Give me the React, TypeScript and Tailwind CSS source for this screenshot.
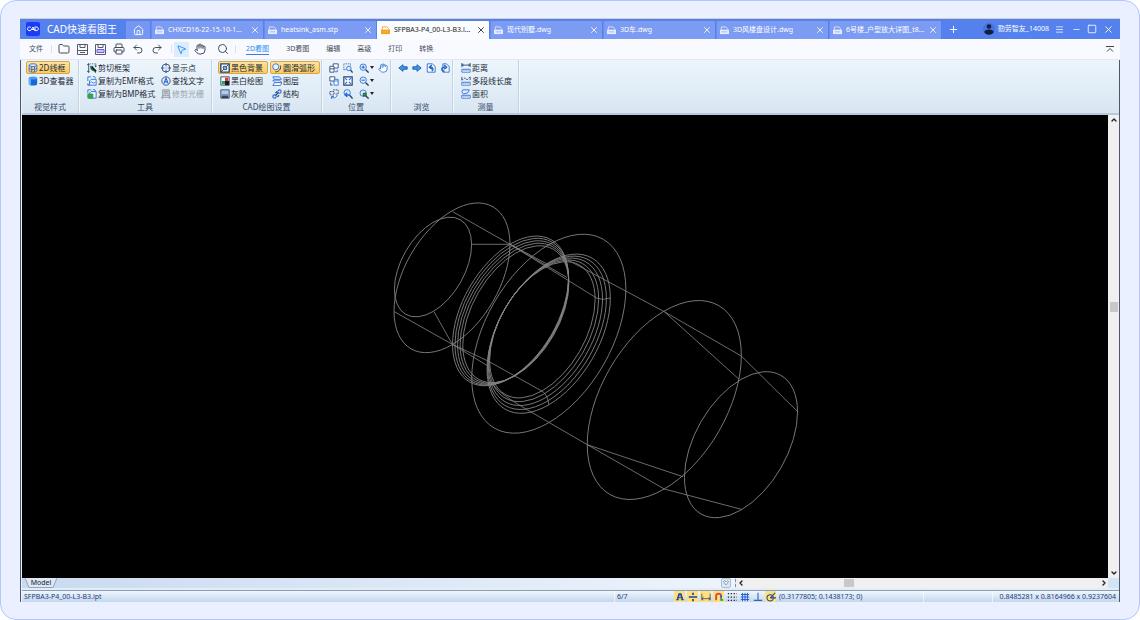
import React, { useState } from 'react';
import {
  ChevronDown, ChevronLeft, ChevronRight, ChevronUp, Folder, Hand, House, Menu, Minus, MousePointer2,
  Plus, Printer, Redo2, Search, Square, Undo2, X,
} from 'lucide-react';

const tabs = [
  'CHXCD16-22-15-10-1...',
  'heatsink_asm.stp',
  'SFPBA3-P4_00-L3-B3.i...',
  '现代别墅.dwg',
  '3D车.dwg',
  '3D风楼盘设计.dwg',
  '6号楼_户型放大详图_t8...',
];

const menus = ['2D看图', '3D看图', '编辑', '高级', '打印', '转换'];

const NAVY = '#23406f';
const BLUE = '#2468d6';
const CYAN = '#3b9be8';

// Small 12x12 glyphs used in the ribbon
const glyphs: Record<string, React.ReactNode> = {
  wireframe: (
    <g fill="none" stroke={BLUE}>
      <ellipse cx="6" cy="2.6" rx="4.6" ry="1.7" fill="#dcecff" />
      <path d="M1.4 2.6v6.6c0 2.4 9.2 2.4 9.2 0V2.6M1.4 6c0 2.3 9.2 2.3 9.2 0M4.4 4.2v6.6M7.8 4.2v6.6" />
    </g>
  ),
  cylinder: (
    <g>
      <path d="M1 2.5v7c0 2.6 10 2.6 10 0v-7z" fill="#1769d8" />
      <path d="M1 2.5v7c0 .8 1 1.4 2.5 1.7V2.5z" fill="#63b2f5" />
      <ellipse cx="6" cy="2.5" rx="5" ry="1.8" fill="#4c9df0" />
    </g>
  ),
  cutFrame: (
    <g fill="none" stroke={NAVY}>
      <path d="M0 2h3M2 0v12M0 10h3M10 2v3M10 8v4" />
      <path d="M4 1h7v4" strokeDasharray="1 1" />
      <path d="M4 4h3v3l2 3-4-2z" fill="#1d7c3b" stroke="#1d7c3b" />
      <path d="M6 5l5 5" stroke="#151d2b" strokeWidth="2" />
    </g>
  ),
  copyEmf: (
    <g fill="none" stroke={BLUE}>
      <path d="M1 1h4M1 1v5M5 4h6v7H3V6z" fill="#e6f2ff" />
      <path d="M4 8c2-3 3 3 6-1M7 1c2-1 3 0 3 2" />
      <path d="M1 9v2h2" stroke={NAVY} />
    </g>
  ),
  copyBmp: (
    <g fill="none" stroke={BLUE}>
      <path d="M1 1h4M1 1v4M5 3h6v8H3V5z" fill="#e6f2ff" />
      <path d="M1 6h6v5H1z" fill="#35a84b" stroke="#2b9a45" />
      <path d="M7 1c2-1 3 0 3 2" />
    </g>
  ),
  point: (
    <g fill="none" stroke={NAVY}>
      <circle cx="6" cy="6" r="4.8" />
      <path d="M6 0v4M6 8v4M0 6h4M8 6h4" />
      <path d="M5.5 6h1" stroke={BLUE} />
    </g>
  ),
  findText: (
    <g fill="none" stroke={NAVY}>
      <circle cx="6" cy="6" r="5" fill="#e3efff" />
      <path d="M3.5 9L6 2.5 8.5 9M4.5 7h3" stroke={BLUE} strokeWidth="1.3" />
    </g>
  ),
  raster: (
    <g fill="none" stroke="#8f969e">
      <path d="M2 1h8v7H2z" fill="#c4c9cf" />
      <path d="M0 10h12M2 8v4M10 8v4M4 3h4M4 5h4" />
    </g>
  ),
  blackBg: (
    <g>
      <path d="M1 1h10v10H1z" fill="#fff" stroke={NAVY} strokeWidth="1.6" />
      <path d="M1 11l3-3M11 1L8 4M4 4h4v4H4z" fill="#79aef2" stroke={NAVY} />
    </g>
  ),
  monoDraw: (
    <g>
      <path d="M1 1h10v10H1z" fill="#fff" stroke={NAVY} />
      <path d="M6 2h4v4H6z" fill="#e23a34" />
      <path d="M2 6h4v4H2z" fill="#2ea44f" />
      <path d="M6 6h5v5H6z" fill="#151d2b" />
    </g>
  ),
  grayscale: (
    <g>
      <path d="M1 1h10v10H1z" fill="#b5cdea" stroke={NAVY} />
      <path d="M2 6h8v2H2z" fill="#8395ad" />
      <path d="M2 8h8v3H2z" fill="#39465a" />
    </g>
  ),
  smoothArc: (
    <g fill="none" stroke={BLUE}>
      <circle cx="4.5" cy="4.5" r="3.6" fill="#e8f1ff" />
      <path d="M10 3c1.5 4-2 8-6 7.5" stroke={NAVY} strokeWidth="1.2" />
    </g>
  ),
  layers: (
    <g fill="#fff" stroke={BLUE}>
      <path d="M3 8h9l-2 3.5H1z" />
      <path d="M1 5h8l2.5 2.5H3z" />
      <path d="M1 1h8l2.5 3H3z" fill="#e8f1ff" />
    </g>
  ),
  structure: (
    <g fill="none" stroke={BLUE} strokeWidth="1.3">
      <circle cx="9" cy="3" r="2" />
      <circle cx="3" cy="9" r="2" />
      <path d="M4.5 7.5l3-3M4 5l2-2M6.5 9.5l2-2" stroke={NAVY} />
    </g>
  ),
  viewFront: (
    <g fill="#fff" stroke={NAVY}>
      <path d="M5 1h6v5H5z" />
      <path d="M1 4h5v7H1zM1 7h5" />
      <path d="M7 10.5h3V8" stroke={BLUE} fill="none" />
    </g>
  ),
  viewBack: (
    <g fill="#fff" stroke={NAVY}>
      <path d="M1 1h6v5H1z" />
      <path d="M6 4h5v7H6zM6 6h5" stroke={BLUE} />
      <path d="M2 8v3h2" fill="none" />
    </g>
  ),
  viewRotate: (
    <g fill="none" stroke={NAVY}>
      <path d="M5 1h6v5H8M1 3h5v4H1z" strokeDasharray="2 1" />
      <path d="M3 9c2 3 6 2 7-2M3 12V9h3" stroke={BLUE} />
    </g>
  ),
  zoomWindow: (
    <g fill="none" stroke={NAVY}>
      <path d="M1 8V1h8v2M1 8h3" strokeDasharray="1 1" />
      <circle cx="7" cy="6.5" r="2.7" stroke={BLUE} fill="#dcecff" />
      <path d="M9 8.5l2.5 3" strokeWidth="1.6" />
    </g>
  ),
  zoomFit: (
    <g fill="none" stroke={NAVY}>
      <path d="M1 1h10v10H1z" strokeWidth="1.4" fill="#fff" />
      <path d="M2.5 2.5L5 5M9.500 2.5L7 5M2.5 9.500L5 7M9.500 9.500L7 7" stroke={BLUE} strokeWidth="1.3" />
    </g>
  ),
  zoomPrev: (
    <g fill="none" stroke={BLUE}>
      <circle cx="5" cy="4.5" r="3.8" fill="#dcecff" />
      <path d="M8 7.5l3.5 4" stroke={NAVY} strokeWidth="1.6" />
      <path d="M2.5 7h6M5 4.5L2.5 7 5 9.500" strokeWidth="1.5" />
    </g>
  ),
  zoomIn: (
    <g fill="none" stroke={BLUE}>
      <circle cx="5" cy="5" r="3.8" fill="#e2efff" />
      <path d="M3 5h4M5 3v4" strokeWidth="1.3" />
      <path d="M8 8l3.5 3.5" stroke={NAVY} strokeWidth="1.7" />
    </g>
  ),
  zoomOut: (
    <g fill="none" stroke={BLUE}>
      <circle cx="5" cy="5" r="3.8" fill="#e2efff" />
      <path d="M3 5h4" strokeWidth="1.3" />
      <path d="M8 8l3.5 3.5" stroke={NAVY} strokeWidth="1.7" />
    </g>
  ),
  zoomObject: (
    <g fill="none" stroke={BLUE}>
      <circle cx="5" cy="5" r="3.8" fill="#e2efff" />
      <path d="M5 5h3.5v3.5H5z" fill="#2f8f46" stroke="#1d5c34" />
      <path d="M8 8l3.5 3.5" stroke={NAVY} strokeWidth="1.7" />
    </g>
  ),
  arrowLeft: <path d="M11 4.5H6V2L1 6l5 4V7.5h5z" fill={CYAN} stroke="#1b4fb0" />,
  arrowRight: <path d="M1 4.5h5V2l5 4-5 4V7.5H1z" fill={CYAN} stroke="#1b4fb0" />,
  pageBack: (
    <g fill="none" stroke="#1b5fc7">
      <path d="M1.5 1h6l3.500 3v7H1.5z" fill="#fff" />
      <path d="M7 9.500c3-2 1-5-2.500-4.500M7 2.500L4 5.200 7 7.500" strokeWidth="1.6" />
    </g>
  ),
  pageNext: (
    <g fill="none" stroke="#1b5fc7">
      <path d="M3.500 1h4l3.500 3v7H3.500z" fill="#fff" />
      <path d="M5.500 10C1 9.500 1 4.500 6 5M5 2.500L8 5.200 5 7.500" strokeWidth="1.6" />
    </g>
  ),
  distance: (
    <g fill="none" stroke={NAVY}>
      <path d="M1 0v5M11 0v5M1 2.5h10M3 1.5l-1.5 1L3 3.5M9 1.5l1.5 1L9 3.5" />
      <path d="M1 7.5h10V11H1zM3.5 8v1.5M6 8v1.5M8.5 8v1.5" stroke={BLUE} fill="#fff" />
    </g>
  ),
  polyline: (
    <g fill="none" stroke={NAVY}>
      <path d="M1 1v4M11 1v4" />
      <path d="M1 5l4-3 2 3 4-4" strokeDasharray="2 1" />
      <path d="M1 7.5h10V11H1zM3.5 8v1.5M6 8v1.5M8.5 8v1.5" stroke={BLUE} fill="#fff" />
    </g>
  ),
  area: (
    <g fill="none" stroke={BLUE}>
      <path d="M2 1h8L8 4.500 3 6 1 3.500z" fill="#dcecff" />
      <path d="M1 7.5h10V11H1zM3.5 8v1.5M6 8v1.5M8.5 8v1.5" fill="#fff" />
    </g>
  ),
};

function Glyph({ name }: { name: string }) {
  return (
    <svg viewBox="0 0 12 12" className="h-[10px] w-[10px] shrink-0" aria-hidden="true">
      {glyphs[name]}
    </svg>
  );
}

type ToolProps = { icon: string; label: string; active?: boolean; disabled?: boolean };

function Tool({ icon, label, active, disabled }: ToolProps) {
  return (
    <button
      disabled={disabled}
      className={`flex h-[13px] items-center gap-px rounded-[2px] border pl-px pr-1 text-[8px] leading-none whitespace-nowrap ${
        active
          ? 'border-[#d6a64b] bg-gradient-to-b from-[#fde3a0] to-[#fbcb5c]'
          : 'border-transparent'
      } ${disabled ? 'text-[#9aa3ad]' : 'text-[#222a38]'}`}
    >
      <Glyph name={icon} />
      {label}
    </button>
  );
}

function IconTool({ icon, label, menu }: { icon: string; label: string; menu?: boolean }) {
  return (
    <button aria-label={label} className="flex h-[13px] items-center gap-px">
      <Glyph name={icon} />
      {menu && (
        <svg viewBox="0 0 4 3" className="h-[3px] w-1" aria-hidden="true">
          <path d="M0 0h4L2 3z" fill="#222" />
        </svg>
      )}
    </button>
  );
}

function Group({ title, className, children }: { title: string; className: string; children: React.ReactNode }) {
  return (
    <section className={`flex shrink-0 flex-col justify-between border-r border-[#c3d3e4] shadow-[1px_0_0_#f3f8fd] ${className}`}>
      <div className="flex pt-px">{children}</div>
      <h2 className="text-center text-[8px] leading-[12px] text-[#33486b]">{title}</h2>
    </section>
  );
}

function Col({ className = '', children }: { className?: string; children: React.ReactNode }) {
  return <div className={`flex flex-col items-start ${className}`}>{children}</div>;
}

function FileIcon({ active }: { active: boolean }) {
  return (
    <svg viewBox="0 0 10 10" className="h-[9px] w-[9px] shrink-0" aria-hidden="true">
      <path d="M1.5 4V1h5l2 2v1" fill={active ? '#fff' : 'none'} stroke={active ? '#f0a43a' : '#dfe7ff'} />
      <path d="M0 4h10v5H0z" fill={active ? '#f7a21b' : '#e6ecff'} />
      <path d="M2 6.5h6" stroke={active ? '#f9b447' : '#9fb5f6'} />
    </svg>
  );
}

function TitleBar() {
  const [current, setCurrent] = useState(2);
  return (
    <header className="flex h-[21px] shrink-0 items-end border-t border-[#d5cfc4] bg-[#5581ef] text-white">
      <div className="flex h-5 w-[106px] shrink-0 items-center gap-[7px] pl-[6px]">
        <svg viewBox="0 0 14 14" className="h-[14px] w-[14px] shrink-0" aria-label="CAD">
          <rect width="14" height="14" rx="2" fill="#1a3cf5" />
          <path
            d="M4.8 5.5c-1-1.2-3.3-.6-3.3 1.3s2.3 2.6 3.6 1.2L7 5l1.5 3.5M6 7.5h2.5M8.5 5h1.7c3 0 3 3.600 0 3.600H9V5.5"
            fill="none" stroke="#fff"
          />
        </svg>
        <h1 className="text-[10px] leading-none whitespace-nowrap">CAD快速看图王</h1>
      </div>
      <div className="flex min-w-0 gap-px">
        <button aria-label="主页" className="flex h-[18px] w-6 shrink-0 items-center justify-center rounded-t-[1px] bg-[#7597f2]">
          <House className="h-[11px] w-[11px]" strokeWidth={2} />
        </button>
        {tabs.map((tab, i) => {
          const active = i === current;
          return (
            <div
              key={tab}
              className={`flex h-[18px] w-28 min-w-0 items-center rounded-t-[1px] border-l pl-[3px] pr-[3px] ${
                active ? 'border-white bg-[#fbfcff] text-[#222]' : 'border-[#668cf0] bg-[#7c9bf3] text-white'
              }`}
            >
              <button
                onClick={() => setCurrent(i)}
                className="flex min-w-0 flex-1 items-center gap-1 overflow-hidden text-[7px] leading-[10px] whitespace-nowrap"
              >
                <FileIcon active={active} />
                {tab}
              </button>
              <button aria-label="关闭标签" className="shrink-0">
                <X className="h-[10px] w-[10px]" strokeWidth={2} />
              </button>
            </div>
          );
        })}
      </div>
      <div className="flex h-5 flex-1 items-center justify-between pl-[7px] pr-[6px]">
        <button aria-label="新建标签"><Plus className="h-[11px] w-[11px]" strokeWidth={2} /></button>
        <div className="flex items-center">
          <button className="flex items-center gap-[3px] text-[7px] leading-[10px] whitespace-nowrap">
            <svg viewBox="0 0 12 12" className="h-3 w-3" aria-hidden="true">
              <circle cx="6" cy="6" r="6" fill="#4474df" />
              <circle cx="6" cy="3.5" r="2.3" fill="#14203b" />
              <path d="M1.2 9c.6-3.5 9-3.5 9.6 0-1.8 3.5-7.8 3.5-9.6 0z" fill="#14203b" />
            </svg>
            勤劳智友_14008
          </button>
          <button aria-label="菜单" className="ml-[6px]"><Menu className="h-[9px] w-[9px]" strokeWidth={2} /></button>
          <button aria-label="最小化" className="ml-2"><Minus className="h-[9px] w-[9px]" strokeWidth={2} /></button>
          <button aria-label="最大化" className="ml-[6px]"><Square className="h-[10px] w-[10px]" strokeWidth={2} /></button>
          <button aria-label="关闭" className="ml-[6px]"><X className="h-[11px] w-[11px]" strokeWidth={2} /></button>
        </div>
      </div>
    </header>
  );
}

function SaveIcon({ pdf }: { pdf?: boolean }) {
  return (
    <svg viewBox="0 0 11 11" className="h-[11px] w-[11px]" fill="none" stroke="#555b66" aria-hidden="true">
      <path d="M.5.5h10v10H.5zM3 .5v3h5v-3" />
      {pdf ? <path d="M2 5.5h7v3H2z" stroke="#6b5cf0" fill="#c9c3fb" /> : <path d="M.5 6.5h10M3 8.5h5" />}
    </svg>
  );
}

function MenuBar() {
  const [current, setCurrent] = useState('2D看图');
  const icon = 'h-3 w-3';
  return (
    <nav className="flex h-[21px] shrink-0 items-center border-b border-[#e3e8f0] bg-[#f8faff] pl-[9px] pr-1 text-[7px] text-[#454b57]">
      <button className="w-[22px] text-left">文件</button>
      <span className="h-2 w-px bg-[#dde2ea]" />
      <div className="ml-[6px] flex items-center gap-[7px]">
        <button aria-label="打开"><Folder className={icon} strokeWidth={2} /></button>
        <button aria-label="保存"><SaveIcon /></button>
        <button aria-label="导出PDF"><SaveIcon pdf /></button>
        <button aria-label="打印"><Printer className={icon} strokeWidth={2} /></button>
        <button aria-label="撤销"><Undo2 className={icon} strokeWidth={2} /></button>
        <button aria-label="重做"><Redo2 className={icon} strokeWidth={2} /></button>
      </div>
      <span className="ml-2 h-2 w-px bg-[#dde2ea]" />
      <button aria-label="选择" className="ml-[2px] flex h-[15px] w-[15px] items-center justify-center bg-[#dcecfe]">
        <MousePointer2 className="h-[11px] w-[11px] text-[#2491f5]" strokeWidth={2} />
      </button>
      <button aria-label="平移" className="ml-[5px]"><Hand className={icon} strokeWidth={2} /></button>
      <button aria-label="搜索" className="ml-[11px]"><Search className={icon} strokeWidth={2} /></button>
      <span className="ml-[6px] h-2 w-px bg-[#dde2ea]" />
      <div className="ml-[10px] flex gap-[17px]">
        {menus.map((menu) => (
          <button
            key={menu}
            onClick={() => setCurrent(menu)}
            className={`border-b leading-[11px] ${
              menu === current ? 'border-[#3f78ee] text-[#2c8df2]' : 'border-transparent'
            }`}
          >
            {menu}
          </button>
        ))}
      </div>
      <button aria-label="收起功能区" className="ml-auto mr-[2px]">
        <svg viewBox="0 0 8 8" className="h-2 w-2" fill="none" stroke="#444" aria-hidden="true">
          <path d="M0 1.5h8M1 6.5l3-3 3 3" />
        </svg>
      </button>
    </nav>
  );
}

function Ribbon() {
  return (
    <div className="flex h-[55px] shrink-0 border-b-2 border-[#b6c9df] bg-gradient-to-b from-[#edf5fc] to-[#d8e6f2]">
      <Group title="视觉样式" className="w-[57px]">
        <Col className="pl-1">
          <Tool icon="wireframe" label="2D线框" active />
          <Tool icon="cylinder" label="3D查看器" />
        </Col>
      </Group>
      <Group title="工具" className="w-[133px]">
        <Col className="w-[73px] pl-[6px]">
          <Tool icon="cutFrame" label="剪切框架" />
          <Tool icon="copyEmf" label="复制为EMF格式" />
          <Tool icon="copyBmp" label="复制为BMP格式" />
        </Col>
        <Col className="pl-[7px]">
          <Tool icon="point" label="显示点" />
          <Tool icon="findText" label="查找文字" />
          <Tool icon="raster" label="修剪光栅" disabled />
        </Col>
      </Group>
      <Group title="CAD绘图设置" className="w-[110px]">
        <Col className="w-[52px] pl-[6px]">
          <Tool icon="blackBg" label="黑色背景" active />
          <Tool icon="monoDraw" label="黑白绘图" />
          <Tool icon="grayscale" label="灰阶" />
        </Col>
        <Col className="pl-[6px]">
          <Tool icon="smoothArc" label="圆滑弧形" active />
          <Tool icon="layers" label="图层" />
          <Tool icon="structure" label="结构" />
        </Col>
      </Group>
      <Group title="位置" className="w-[69px]">
        <div className="flex gap-1 pl-[7px]">
          <Col>
            <IconTool icon="viewFront" label="前视图" />
            <IconTool icon="viewBack" label="后视图" />
            <IconTool icon="viewRotate" label="旋转视图" />
          </Col>
          <Col>
            <IconTool icon="zoomWindow" label="窗口缩放" />
            <IconTool icon="zoomFit" label="适合窗口" />
            <IconTool icon="zoomPrev" label="上一缩放" />
          </Col>
          <Col className="pl-[2px]">
            <IconTool icon="zoomIn" label="放大" menu />
            <IconTool icon="zoomOut" label="缩小" menu />
            <IconTool icon="zoomObject" label="缩放对象" menu />
          </Col>
          <button aria-label="平移" className="h-[13px]">
            <Hand className="h-[10px] w-[10px] fill-white text-[#2a72d8]" strokeWidth={2} />
          </button>
        </div>
      </Group>
      <Group title="浏览" className="w-[62px]">
        <div className="flex gap-1 pl-[7px]">
          <IconTool icon="arrowLeft" label="后退" />
          <IconTool icon="arrowRight" label="前进" />
          <IconTool icon="pageBack" label="上一页" />
          <IconTool icon="pageNext" label="下一页" />
        </div>
      </Group>
      <Group title="测量" className="w-[66px]">
        <Col className="pl-[6px]">
          <Tool icon="distance" label="距离" />
          <Tool icon="polyline" label="多段线长度" />
          <Tool icon="area" label="面积" />
        </Col>
      </Group>
    </div>
  );
}

// [cx, cy, semi-major axis]; every circle of the part lies in the same isometric plane
const circles = [
  [433, 267, 54.6],
  [452, 277.8, 82],
  [510.5, 310.9, 82],
  [511.8, 311.7, 80.4],
  [513.1, 312.5, 78.6],
  [514.4, 313.3, 76.8],
  [515.8, 314.2, 75],
  [542.4, 329.8, 74.6],
  [543.8, 330.8, 77.6],
  [545.4, 331.8, 80.8],
  [547, 332.8, 84],
  [548.7, 333.7, 87.2],
  [548.8, 333.7, 109],
  [664.3, 400, 109],
  [741, 444.7, 80],
];

const edges = [
  'M452.7 211.7L510 244.3L567 277.5',
  'M471.7 244.3H510L597 298.3Q603 300.5 610 298',
  'M510 244.3L549 265',
  'M567.7 260L664.3 311.7L741.3 356L797.7 411.7',
  'M664.3 311.7L738.7 379',
  'M394.3 311.7L452.3 344.3L488 366',
  'M434 311.7L452.3 344.3L488 361L543 391.7Q548.5 397 548.7 404.7',
  'M493.3 385Q500 394 525 408.5L587.3 444.7L664.3 489L741.3 509.3',
  'M587.3 444.7L683 476.7',
];

function Drawing() {
  return (
    <svg viewBox="22 115 1086 463" className="h-full w-full" fill="none" stroke="#858585" strokeWidth="0.8" role="img" aria-label="SFPBA3-P4_00-L3-B3.ipt">
      {circles.map(([cx, cy, a], i) => (
        <ellipse key={i} cx={cx} cy={cy} rx={a} ry={a * 0.577} transform={`rotate(-60 ${cx} ${cy})`} />
      ))}
      {edges.map((d) => <path key={d} d={d} />)}
    </svg>
  );
}

function Viewport() {
  return (
    <main className="flex min-h-0 flex-1">
      <div className="min-w-0 flex-1 bg-black"><Drawing /></div>
      <div className="flex w-[11px] shrink-0 flex-col items-center bg-[#f0f0f0] text-[#222]">
        <button aria-label="向上滚动" className="flex h-[10px] items-center"><ChevronUp className="h-2 w-2" strokeWidth={4} /></button>
        <div className="grow-[9]" />
        <div className="h-[10px] w-2 bg-[#c8c8c8]" />
        <div className="grow-[13]" />
        <button aria-label="向下滚动" className="flex h-[10px] items-center"><ChevronDown className="h-2 w-2" strokeWidth={4} /></button>
      </div>
    </main>
  );
}

function SheetBar() {
  return (
    <div className="flex h-3 shrink-0 border-b-2 border-[#e4edf7] bg-[#cfdff2] text-[#222]">
      <div className="flex min-w-0 flex-1 items-center justify-between bg-gradient-to-r from-[#c9daf0] to-[#edf4fc] pr-1">
        <button className="relative ml-[3px] h-[10px] w-8 text-[7px] leading-[8px]">
          <svg viewBox="0 0 32 10" className="absolute inset-0 h-full w-full" aria-hidden="true">
            <path d="M0 0l4 9.5h24L32 0" fill="#dce8f6" stroke="#8fa5c0" />
          </svg>
          <span className="relative">Model</span>
        </button>
        <button aria-label="图纸列表" className="flex h-[10px] w-[10px] items-center justify-center rounded-[2px] border border-[#a9bfd8] bg-[#d9e8f8]">
          <svg viewBox="0 0 6 6" className="h-[6px] w-[6px]" aria-hidden="true">
            <path d="M.5 1.5l1-.7L3 1.8 4.5.8l1 .7L3 5z" fill="#fff" stroke="#7b7a66" strokeWidth=".7" />
          </svg>
        </button>
      </div>
      <span className="my-px border-l border-dashed border-[#7e92ae]" />
      <div className="flex w-[372px] shrink-0 items-center bg-[#f0f0f0] pl-px">
        <button aria-label="向左滚动"><ChevronLeft className="h-2 w-2" strokeWidth={4} /></button>
        <div className="grow-[2]" />
        <div className="h-2 w-[10px] bg-[#c8c8c8]" />
        <div className="grow-[5]" />
        <button aria-label="向右滚动"><ChevronRight className="h-2 w-2" strokeWidth={4} /></button>
      </div>
      <div className="w-[11px] shrink-0 bg-[#d3e4f6]" />
    </div>
  );
}

const toggles: { label: string; on: boolean; art: React.ReactNode }[] = [
  { label: '线宽', on: true, art: <path d="M4.2 1.5h3.5L10 9h1v1H7V9h1l-.4-1.5H4.2L3.8 9H5v1H1V9h1zM4.7 6.2h2.4L6 3z" fill="#1b429e" /> },
  { label: '中点', on: true, art: <path d="M1 6h10M6 1v2.5M6 8.5V11" stroke="#1b429e" strokeWidth="2" /> },
  { label: '标注', on: true, art: <path d="M1 2v8M11 2v8M1 8h10M3 6L1 8l2 2M9 6l2 2-2 2" stroke="#3c4d78" fill="none" /> },
  {
    label: '捕捉',
    on: true,
    art: (
      <g fill="none" strokeWidth="2.2">
        <path d="M2.5 10V5c0-4 6-4 6 0" stroke="#e2443b" />
        <path d="M8.5 4v4" stroke="#2a63cf" />
        <path d="M7.5 9.5H11" stroke="#29a744" />
      </g>
    ),
  },
  { label: '栅格点', on: false, art: <path d="M1 2h11M1 6h11M1 10h11" stroke="#222" strokeWidth="1.5" strokeDasharray="1.5 2" /> },
  { label: '网格', on: false, art: <path d="M1 3h10M1 6h10M1 9h10M3 1v10M6 1v10M9 1v10" stroke="#2a63cf" strokeWidth="1.2" /> },
  { label: '正交', on: false, art: <path d="M1 10h10M6 1v9" stroke="#3565ab" strokeWidth="1.3" /> },
  {
    label: '极轴',
    on: true,
    art: (
      <g fill="none" stroke="#274b93" strokeWidth="1.3">
        <circle cx="5" cy="7" r="3.8" />
        <path d="M5 7l6-6M5 7h7" />
      </g>
    ),
  },
];

function StatusBar() {
  return (
    <footer className="flex h-3 shrink-0 items-center border-t border-[#8b9db3] bg-gradient-to-b from-[#f0f7fe] to-[#c3d7ed] text-[7px] leading-[11px] whitespace-nowrap text-[#23407c]">
      <span className="min-w-0 flex-1 pl-[2px]">SFPBA3-P4_00-L3-B3.ipt</span>
      <span className="w-[60px] shrink-0 border-l border-white/60 pl-[2px]">6/7</span>
      <div className="flex shrink-0 gap-[2px]">
        {toggles.map(({ label, on, art }) => (
          <button key={label} aria-label={label} className={`flex h-[11px] w-[11px] items-center justify-center ${on ? 'bg-[#ffe07d]' : ''}`}>
            <svg viewBox="0 0 12 12" className="h-[10px] w-[10px]" aria-hidden="true">{art}</svg>
          </button>
        ))}
      </div>
      <span className="w-[147px] shrink-0 pl-[3px]">(0.3177805; 0.1438173; 0)</span>
      <span className="h-full w-[70px] shrink-0 border-x border-white/60" />
      <span className="w-[126px] shrink-0 pr-[3px] text-right">0.8485281 x 0.8164966 x 0.9237604</span>
    </footer>
  );
}

export default function App() {
  return (
    <div className="h-screen w-full bg-white font-['Noto_Sans','Noto_Sans_CJK_SC',sans-serif]">
      <div className="flex h-full flex-col rounded-2xl border border-[#b3c7fd] bg-[#eaf0ff] px-[19px] py-[17px]">
        <TitleBar />
        <MenuBar />
        <div className="flex min-h-0 flex-1 flex-col border-x border-[#4d5866] bg-[#eaf2fa] pl-px">
          <Ribbon />
          <Viewport />
          <SheetBar />
          <StatusBar />
        </div>
      </div>
    </div>
  );
}
